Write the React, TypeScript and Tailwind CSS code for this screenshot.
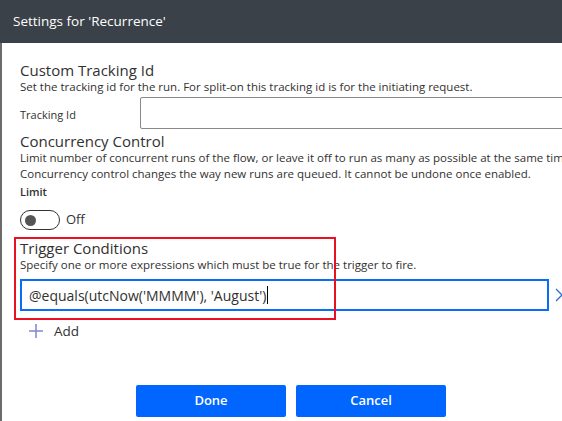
import React from "react";

const font = { fontFamily: '"Open Sans", "Noto Sans", Arial, sans-serif' };

export default function App() {
  return (
    <div
      className="relative w-[562px] h-[421px] overflow-hidden bg-white text-[#323130]"
      style={font}
    >
      <div className="h-[43px] bg-[#3b4148] text-white flex items-center pl-[13px] text-[13.5px]">
        Settings for 'Recurrence'
      </div>
      <div className="h-[378px] border-l-[2px] border-[#6b6b6b] w-[700px] pl-[18px] flex flex-col">
        <div className="mt-[18px] text-[15px] leading-[18px] whitespace-nowrap">Custom Tracking Id</div>
        <div className="text-[11.5px] leading-[16px] whitespace-nowrap">
          Set the tracking id for the run. For split-on this tracking id is for the initiating request.
        </div>
        <div className="mt-[2px] flex items-center h-[32px]">
          <div className="w-[120px] text-[11px] pt-[5px]">Tracking Id</div>
          <div className="h-[32px] w-[500px] border border-[#8a8886] rounded-[2px]" />
        </div>
        <div className="mt-[3px] text-[15px] leading-[18px] whitespace-nowrap">Concurrency Control</div>
        <div className="text-[11.5px] leading-[16px] whitespace-nowrap">
          Limit number of concurrent runs of the flow, or leave it off to run as many as possible at the same time.
        </div>
        <div className="text-[11.5px] leading-[16px] whitespace-nowrap">
          Concurrency control changes the way new runs are queued. It cannot be undone once enabled.
        </div>
        <div className="mt-[2px] text-[11px] leading-[16px] font-semibold">Limit</div>
        <div className="mt-[10px] flex items-center h-[20px]">
          <div className="w-[40px] h-[20px] rounded-full border border-[#323130] flex items-center pl-[4px]">
            <div className="w-[11px] h-[11px] rounded-full bg-[#555]" />
          </div>
          <span className="ml-[6px] text-[13px]">Off</span>
        </div>
        <div className="mt-[9px] text-[15px] leading-[18px] whitespace-nowrap">Trigger Conditions</div>
        <div className="text-[11.5px] leading-[16px] whitespace-nowrap">
          Specify one or more expressions which must be true for the trigger to fire.
        </div>
        <div className="mt-[6px] flex items-center">
          <div className="w-[529px] h-[32px] border-[2px] border-[#0b6cfb] flex items-center pl-[7px] text-[14px] whitespace-nowrap">
            @equals(utcNow('MMMM'), 'August')
            <span className="inline-block w-[1px] h-[18px] bg-black ml-[1px]" />
          </div>
          <svg className="ml-[6px]" width="14" height="14" viewBox="0 0 14 14">
            <path d="M1 1 L13 13 M13 1 L1 13" stroke="#2f6fdc" strokeWidth="1.3" fill="none" />
          </svg>
        </div>
        <div className="mt-[10px] flex items-center h-[20px] pl-[8px]">
          <svg width="16" height="16" viewBox="0 0 16 16">
            <path d="M8 1 V15 M1 8 H15" stroke="#7f85d4" strokeWidth="1.5" fill="none" />
          </svg>
          <span className="ml-[10px] text-[13.5px]">Add</span>
        </div>
        <div className="mt-[44px] flex gap-[10px] pl-[116px]">
          <button className="w-[150px] h-[32px] bg-[#0066ff] text-white text-[13px] font-semibold rounded-[2px]">
            Done
          </button>
          <button className="w-[150px] h-[32px] bg-[#0066ff] text-white text-[13px] font-semibold rounded-[2px]">
            Cancel
          </button>
        </div>
      </div>
      <div className="absolute left-[14px] top-[237px] w-[322px] h-[83px] border-[2px] border-[#e81123] pointer-events-none" />
    </div>
  );
}
